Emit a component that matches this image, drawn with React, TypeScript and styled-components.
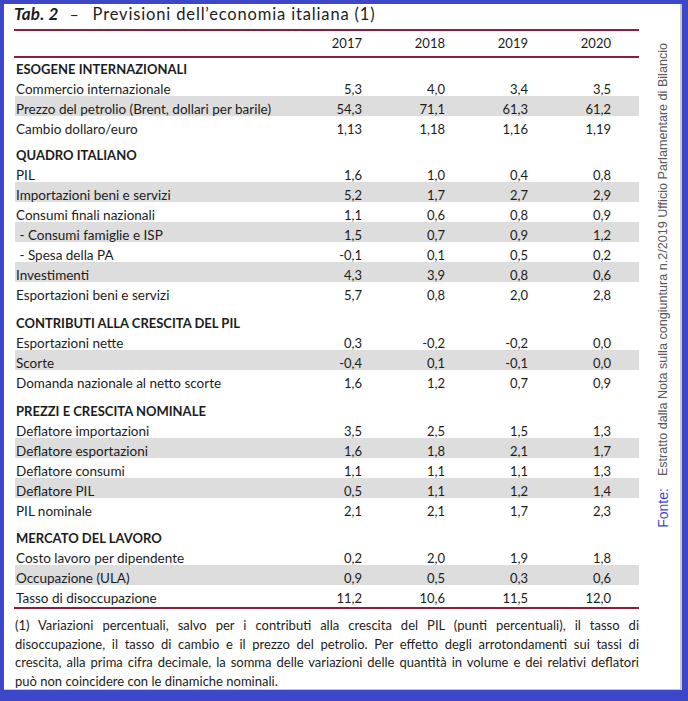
import React from "react";
import styled, { createGlobalStyle } from "styled-components";

const Global = createGlobalStyle`
  html, body { margin: 0; padding: 0; background: #fff; }
  #root { width: 688px; height: 701px; }
`;

const Frame = styled.div`
  box-sizing: border-box;
  width: 688px;
  height: 701px;
  border-style: solid;
  border-color: #3f47c9;
  border-width: 4px 6px 11px 4px;
  box-shadow: inset -2px -1px 0 #c9c9cf;
  background: #fff;
  display: flex;
  font-family: Lato, "Liberation Sans", sans-serif;
  color: #1c1c1c;
`;

const Main = styled.div`
  box-sizing: border-box;
  width: 635px;
  padding-left: 11px;
  display: flex;
  flex-direction: column;
  flex: none;
`;

const Title = styled.div`
  box-sizing: border-box;
  height: 26px;
  line-height: 20px;
  font-size: 16.5px;
  letter-spacing: 0.85px;
  display: flex;
  align-items: baseline;
  margin-left: -1px;
  white-space: nowrap;
`;

const TabLabel = styled.span`
  font-weight: 700;
  font-style: italic;
  font-size: 17px;
  letter-spacing: 0.2px;
`;

const Dash = styled.span`
  font-size: 16px;
  margin: 0 13px 0 11px;
`;

const Rule = styled.div`
  height: 2px;
  margin-left: -1px;
  background: #8a1f3d;
`;

const Row = styled.div<{ $shade?: boolean; $head?: boolean }>`
  display: grid;
  grid-template-columns: 264px repeat(4, 83px);
  padding-right: 28px;
  height: ${(p) => (p.$head ? "25px" : "20px")};
  background: ${(p) => (p.$shade ? "#dddddd" : "transparent")};
  font-size: 13px;
  line-height: 14px;
`;

const Cell = styled.div<{ $head?: boolean }>`
  padding-top: ${(p) => (p.$head ? "5px" : "6px")};
  text-align: right;
  white-space: nowrap;
`;

const LabelCell = styled(Cell)`
  text-align: left;
  padding-left: 1px;
  font-size: 13.5px;
`;

const SectionHead = styled.div<{ $h: number }>`
  box-sizing: border-box;
  height: ${(p) => p.$h}px;
  padding-top: ${(p) => p.$h - 17}px;
  padding-left: 1px;
  font-size: 13px;
  line-height: 20px;
  font-weight: 700;
  white-space: nowrap;
`;

const Spacer = styled.div`
  height: 3px;
`;

const Note = styled.div`
  padding-top: 7px;
  font-size: 13px;
  line-height: 18.4px;
`;

const NoteLine = styled.div<{ $last?: boolean }>`
  text-align: justify;
  text-align-last: ${(p) => (p.$last ? "left" : "justify")};
`;

const Side = styled.div`
  flex: 1;
  display: flex;
  flex-direction: column;
  align-items: center;
  padding-top: 39px;
  padding-left: 4px;
`;

const Vertical = styled.div`
  writing-mode: vertical-rl;
  transform: rotate(180deg);
  font-family: "Liberation Sans", Arial, sans-serif;
  font-size: 12.6px;
  color: #5a5a5a;
  white-space: nowrap;
`;

const Fonte = styled.span`
  color: #3f47c9;
  font-size: 14px;
  margin-inline-end: 12px;
`;

type Data = { label: string; v: string[] };
type Section = { title: string; h: number; rows: Data[] };

const sections: Section[] = [
  {
    title: "ESOGENE INTERNAZIONALI",
    h: 18,
    rows: [
      { label: "Commercio internazionale", v: ["5,3", "4,0", "3,4", "3,5"] },
      { label: "Prezzo del petrolio (Brent, dollari per barile)", v: ["54,3", "71,1", "61,3", "61,2"] },
      { label: "Cambio dollaro/euro", v: ["1,13", "1,18", "1,16", "1,19"] },
    ],
  },
  {
    title: "QUADRO ITALIANO",
    h: 26,
    rows: [
      { label: "PIL", v: ["1,6", "1,0", "0,4", "0,8"] },
      { label: "Importazioni beni e servizi", v: ["5,2", "1,7", "2,7", "2,9"] },
      { label: "Consumi finali nazionali", v: ["1,1", "0,6", "0,8", "0,9"] },
      { label: "\u00a0- Consumi famiglie e ISP", v: ["1,5", "0,7", "0,9", "1,2"] },
      { label: "\u00a0- Spesa della PA", v: ["-0,1", "0,1", "0,5", "0,2"] },
      { label: "Investimenti", v: ["4,3", "3,9", "0,8", "0,6"] },
      { label: "Esportazioni beni e servizi", v: ["5,7", "0,8", "2,0", "2,8"] },
    ],
  },
  {
    title: "CONTRIBUTI ALLA CRESCITA DEL PIL",
    h: 28,
    rows: [
      { label: "Esportazioni nette", v: ["0,3", "-0,2", "-0,2", "0,0"] },
      { label: "Scorte", v: ["-0,4", "0,1", "-0,1", "0,0"] },
      { label: "Domanda nazionale al netto scorte", v: ["1,6", "1,2", "0,7", "0,9"] },
    ],
  },
  {
    title: "PREZZI E CRESCITA NOMINALE",
    h: 28,
    rows: [
      { label: "Deflatore importazioni", v: ["3,5", "2,5", "1,5", "1,3"] },
      { label: "Deflatore esportazioni", v: ["1,6", "1,8", "2,1", "1,7"] },
      { label: "Deflatore consumi", v: ["1,1", "1,1", "1,1", "1,3"] },
      { label: "Deflatore PIL", v: ["0,5", "1,1", "1,2", "1,4"] },
      { label: "PIL nominale", v: ["2,1", "2,1", "1,7", "2,3"] },
    ],
  },
  {
    title: "MERCATO DEL LAVORO",
    h: 27,
    rows: [
      { label: "Costo lavoro per dipendente", v: ["0,2", "2,0", "1,9", "1,8"] },
      { label: "Occupazione (ULA)", v: ["0,9", "0,5", "0,3", "0,6"] },
      { label: "Tasso di disoccupazione", v: ["11,2", "10,6", "11,5", "12,0"] },
    ],
  },
];

const years = ["2017", "2018", "2019", "2020"];

export default function App() {
  return (
    <>
      <Global />
      <Frame>
        <Main>
          <Title>
            <TabLabel>Tab. 2</TabLabel>
            <Dash>–</Dash>
            <span>Previsioni dell’economia italiana (1)</span>
          </Title>
          <Rule />
          <Row $head>
            <LabelCell $head />
            {years.map((y) => (
              <Cell key={y} $head>
                {y}
              </Cell>
            ))}
          </Row>
          <Rule />
          {sections.map((s) => (
            <React.Fragment key={s.title}>
              <SectionHead $h={s.h}>{s.title}</SectionHead>
              {s.rows.map((r, i) => (
                <Row key={r.label} $shade={i % 2 === 1}>
                  <LabelCell>{r.label}</LabelCell>
                  {r.v.map((v, j) => (
                    <Cell key={j}>{v}</Cell>
                  ))}
                </Row>
              ))}
            </React.Fragment>
          ))}
          <Spacer />
          <Rule />
          <Note>
            <NoteLine>
              (1) Variazioni percentuali, salvo per i contributi alla crescita del PIL (punti percentuali), il tasso di
            </NoteLine>
            <NoteLine>
              disoccupazione, il tasso di cambio e il prezzo del petrolio. Per effetto degli arrotondamenti sui tassi di
            </NoteLine>
            <NoteLine>
              crescita, alla prima cifra decimale, la somma delle variazioni delle quantità in volume e dei relativi deflatori
            </NoteLine>
            <NoteLine $last>può non coincidere con le dinamiche nominali.</NoteLine>
          </Note>
        </Main>
        <Side>
          <Vertical>
            <Fonte>Fonte:</Fonte>
            Estratto dalla Nota sulla congiuntura n.2/2019 Ufficio Parlamentare di Bilancio
          </Vertical>
        </Side>
      </Frame>
    </>
  );
}
